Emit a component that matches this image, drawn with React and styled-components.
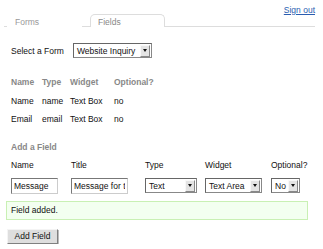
import React from "react";
import styled, { createGlobalStyle } from "styled-components";

const GlobalStyle = createGlobalStyle`
    body {
        margin: 0;
        background: #fff;
        font-family: "Liberation Sans", Arial, sans-serif;
        font-size: 8.5px;
        color: #111;
    }
`;

const Page = styled.div`
    width: 311px;
    padding: 0 8px 0 4px;
`;

const TopRow = styled.div`
    display: flex;
    justify-content: flex-end;
    height: 14px;
    padding-top: 4px;
    box-sizing: border-box;
    line-height: 12px;
`;

const SignOut = styled.a`
    color: #2a5db0;
    text-decoration: underline;
    cursor: pointer;
`;

const TabRow = styled.div`
    display: flex;
    gap: 8px;
    padding-left: 3px;
    height: 12px;
    border-bottom: 1px solid #ddd;
`;

const Tab = styled.div`
    width: 75px;
    box-sizing: border-box;
    padding: 2px 0 0 7px;
    line-height: 11px;
    color: ${p => (p.active ? "#888" : "#999")};
    background: #fff;
    border: 1px solid ${p => (p.active ? "#ddd" : "transparent")};
    border-bottom: none;
    border-radius: 5px 5px 0 0;
    height: 13px;
`;

const Content = styled.div`
    padding-left: 7px;
`;

const FormPick = styled.div`
    display: flex;
    align-items: center;
    gap: 9px;
    margin-top: 16px;
`;

const SelectBox = styled.div`
    display: flex;
    align-items: center;
    justify-content: space-between;
    width: ${p => p.w}px;
    height: 15px;
    box-sizing: border-box;
    border: 1px solid #888;
    border-top-color: #666;
    border-left-color: #666;
    background: #fff;
    padding: 0 1px 0 3px;
    font-size: 8.5px;
    white-space: nowrap;
    overflow: hidden;
`;

const Arrow = styled.span`
    display: flex;
    align-items: center;
    justify-content: center;
    width: 8px;
    height: 10px;
    flex-shrink: 0;
    background: #e4e4e4;
    border: 1px solid #f8f8f8;
    border-right-color: #888;
    border-bottom-color: #888;
    &::after {
        content: "";
        border-left: 2.5px solid transparent;
        border-right: 2.5px solid transparent;
        border-top: 3px solid #111;
    }
`;

const Select = ({ value, w }) => (
    <SelectBox w={w}>
        <span>{value}</span>
        <Arrow />
    </SelectBox>
);

const Table = styled.div`
    display: grid;
    grid-template-columns: 31px 28px 44px auto;
    grid-auto-rows: 18.5px;
    align-items: center;
    margin-top: 15px;
`;

const Head = styled.div`
    font-weight: bold;
    color: #888;
`;

const Cell = styled.div`
    color: #111;
`;

const SectionTitle = styled.div`
    font-weight: bold;
    color: #888;
    margin-top: 12px;
    line-height: 12px;
`;

const FieldGrid = styled.div`
    display: grid;
    grid-template-columns: 60px 74px 60px 66px auto;
    grid-template-rows: 12px 16px;
    row-gap: 7px;
    align-items: center;
    margin-top: 6px;
`;

const Label = styled.div`
    color: #111;
`;

const TextInput = styled.input`
    width: ${p => p.w}px;
    height: 16px;
    box-sizing: border-box;
    margin: 0;
    border: 1px solid #ccc;
    border-top-color: #777;
    border-left-color: #777;
    padding: 0 2px;
    font-family: inherit;
    font-size: 8.5px;
    color: #111;
    background: #fff;
    outline: none;
`;

const Notice = styled.div`
    margin: 7px 7px 0 2px;
    height: 19px;
    box-sizing: border-box;
    padding-left: 4px;
    line-height: 17px;
    background: #f3fff0;
    border: 1px solid #c9f0b4;
    color: #111;
`;

const Button = styled.button`
    display: block;
    margin: 9px 0 0 3px;
    width: 51px;
    height: 15px;
    padding: 0;
    font-family: inherit;
    font-size: 8.5px;
    color: #111;
    background: #dedede;
    border: 1px solid #f4f4f4;
    border-right-color: #808080;
    border-bottom-color: #808080;
    box-shadow: 1px 1px 0 #bbb;
`;

const fields = [
    ["Name", "name", "Text Box", "no"],
    ["Email", "email", "Text Box", "no"],
];

const App = () => {
    return (
        <Page>
            <GlobalStyle />
            <TopRow>
                <SignOut>Sign out</SignOut>
            </TopRow>
            <TabRow>
                <Tab>Forms</Tab>
                <Tab active>Fields</Tab>
            </TabRow>
            <Content>
                <FormPick>
                    <span>Select a Form</span>
                    <Select value="Website Inquiry" w={79} />
                </FormPick>
                <Table>
                    <Head>Name</Head>
                    <Head>Type</Head>
                    <Head>Widget</Head>
                    <Head>Optional?</Head>
                    {fields.map(row =>
                        row.map((v, i) => <Cell key={row[0] + i}>{v}</Cell>)
                    )}
                </Table>
                <SectionTitle>Add a Field</SectionTitle>
                <FieldGrid>
                    <Label>Name</Label>
                    <Label>Title</Label>
                    <Label>Type</Label>
                    <Label>Widget</Label>
                    <Label>Optional?</Label>
                    <TextInput w={47} defaultValue="Message" readOnly />
                    <TextInput w={57} defaultValue="Message for the form" readOnly />
                    <Select value="Text" w={52} />
                    <Select value="Text Area" w={57} />
                    <Select value="No" w={29} />
                </FieldGrid>
            </Content>
            <Notice>Field added.</Notice>
            <Button>Add Field</Button>
        </Page>
    );
};

export default App;
